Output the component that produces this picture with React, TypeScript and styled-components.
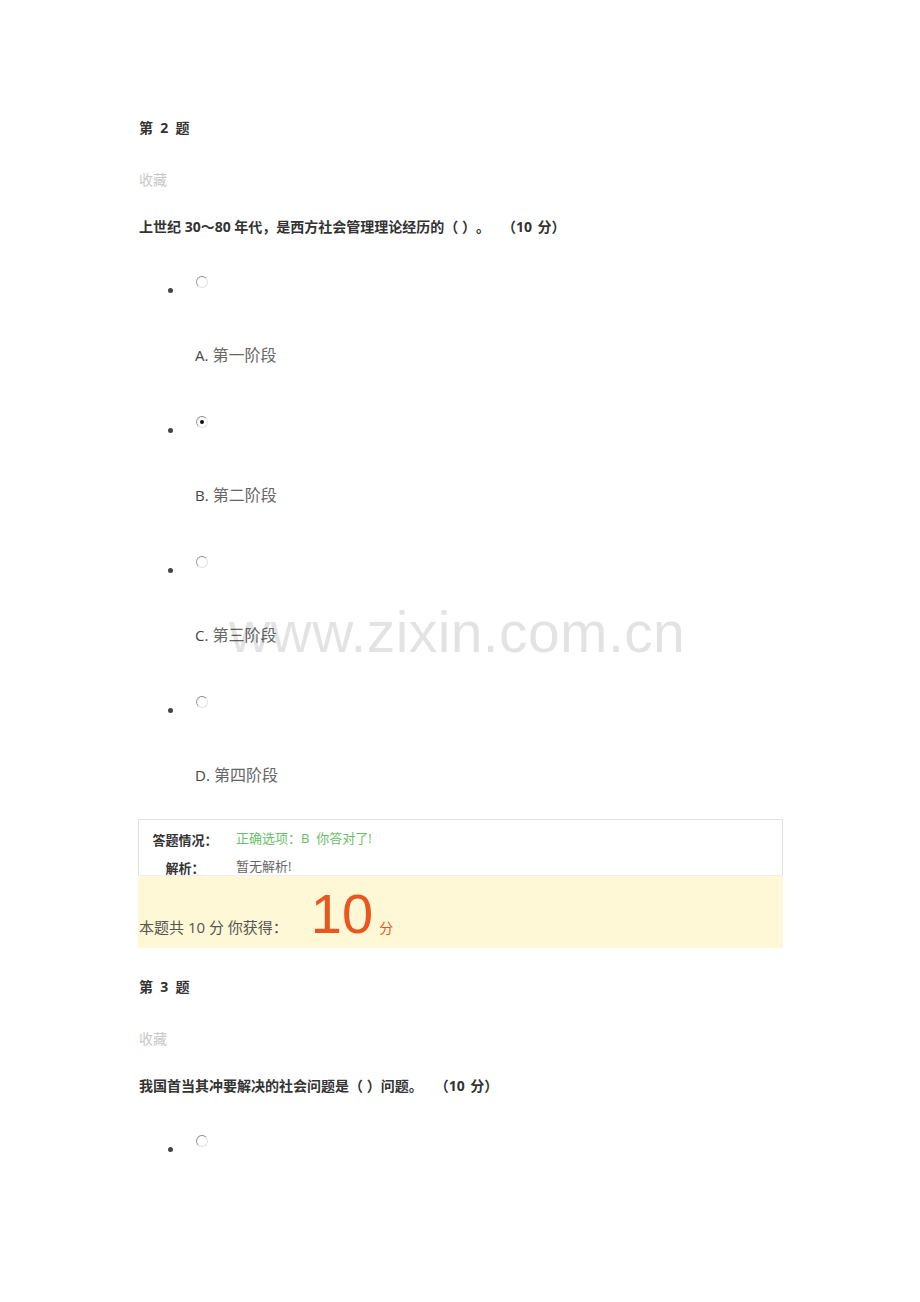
import React from 'react'
import styled, { createGlobalStyle } from 'styled-components'

const GlobalStyle = createGlobalStyle`
  html, body {
    margin: 0;
    padding: 0;
    background: #fff;
  }
  body {
    font-family: "Open Sans", "Noto Sans CJK SC", sans-serif;
    text-spacing-trim: space-all;
    font-feature-settings: "chws" 0, "halt" 0, "palt" 0;
  }
`

const Page = styled.div`
  position: relative;
  width: 920px;
  min-height: 1302px;
  box-sizing: border-box;
  padding: 118px 0 0 139px;
  color: #333;
`

const Title = styled.div`
  font-size: 14px;
  line-height: 20px;
  font-weight: 700;
  color: #333;
  white-space: pre;
`

const Collect = styled.div`
  margin-top: 32px;
  font-size: 14px;
  line-height: 20px;
  color: #c8c8c8;
`

const Stem = styled.div`
  margin-top: 27px;
  font-size: 14px;
  line-height: 20px;
  font-weight: 700;
  color: #333;
  white-space: pre;
`

const Score = styled.span`
  margin-left: 12px;
  word-spacing: 2px;
`

const OptionList = styled.ul`
  list-style: none;
  margin: 0;
  padding: 0;
`

const OptionItem = styled.li`
  margin-top: 37px;
  & + & {
    margin-top: 49px;
  }
`

const OptionRow = styled.div`
  display: flex;
  height: 20px;
  padding-left: 29px;
`

const Bullet = styled.span`
  align-self: flex-end;
  width: 5px;
  height: 5px;
  margin-bottom: 1px;
  border-radius: 50%;
  background: #444;
`

const Radio = styled.span<{ $checked?: boolean }>`
  position: relative;
  align-self: flex-start;
  margin: 2px 0 0 23px;
  width: 12px;
  height: 12px;
  box-sizing: border-box;
  border-radius: 50%;
  border: 1.5px solid;
  border-color: #8a8a8a #e2e2e2 #e2e2e2 #9a9a9a;
  background: #fff;

  &::after {
    content: '';
    display: ${p => (p.$checked ? 'block' : 'none')};
    position: absolute;
    left: 2.5px;
    top: 2.5px;
    width: 4px;
    height: 4px;
    border-radius: 50%;
    background: #111;
  }
`

const OptionLabel = styled.div`
  margin-top: 51px;
  padding-left: 56px;
  font-size: 16px;
  line-height: 20px;
  color: #666;

  b {
    font-weight: 400;
    color: #444;
    font-size: 15px;
  }
`

const ResultBox = styled.div`
  margin: 34px 0 0 -1px;
  width: 645px;
  height: 57px;
  box-sizing: border-box;
  border: 1px solid #e1e1e1;
  border-bottom-color: #eee;
  padding-top: 6px;
  display: grid;
  grid-template-columns: 92px 1fr;
  grid-auto-rows: 24px;
  row-gap: 4px;
  font-size: 13px;
  line-height: 24px;
`

const ResultLabel = styled.div`
  text-align: center;
  color: #333;
  font-weight: 700;
  padding-top: 2px;
`

const ResultValue = styled.div<{ $tone: 'ok' | 'plain' }>`
  padding-left: 5px;
  color: ${p => (p.$tone === 'ok' ? '#68c068' : '#666')};
`

const ScoreBar = styled.div`
  margin-left: -1px;
  width: 645px;
  height: 72px;
  box-sizing: border-box;
  padding: 10px 0 0 1px;
  background: #fef8d6;
  display: flex;
  align-items: baseline;
  line-height: 56px;
  font-size: 15px;
  color: #555;
  white-space: pre;
`

const BigScore = styled.span`
  margin-left: 23px;
  font-family: "Liberation Sans", Arial, sans-serif;
  font-size: 56px;
  color: #e9561f;
`

const Unit = styled.span`
  margin-left: 6px;
  font-size: 14px;
  color: #e9561f;
`

const Next = styled.div`
  margin-top: 29px;
`

const Watermark = styled.div`
  position: absolute;
  left: 229px;
  top: 600px;
  font-family: "Liberation Sans", Arial, sans-serif;
  font-size: 57px;
  line-height: 64px;
  letter-spacing: 0.4px;
  color: rgba(0, 0, 0, 0.11);
  pointer-events: none;
  white-space: nowrap;
`

type Option = { key: string; text: string }

const options: Option[] = [
  { key: 'A', text: '第一阶段' },
  { key: 'B', text: '第二阶段' },
  { key: 'C', text: '第三阶段' },
  { key: 'D', text: '第四阶段' },
]

function Choice ({ option, checked, showLabel = true }: { option: Option; checked?: boolean; showLabel?: boolean }) {
  return (
    <OptionItem>
      <OptionRow>
        <Bullet />
        <Radio $checked={checked} />
      </OptionRow>
      {showLabel && <OptionLabel><b>{option.key}.</b> {option.text}</OptionLabel>}
    </OptionItem>
  )
}

export default function App () {
  return (
    <>
      <GlobalStyle />
      <Page>
        <Title>{'第  2  题'}</Title>
        <Collect>收藏</Collect>
        <Stem>
          上世纪 30～80 年代，是西方社会管理理论经历的（ ）。<Score>（10 分）</Score>
        </Stem>
        <OptionList>
          {options.map(o => (
            <Choice key={o.key} option={o} checked={o.key === 'B'} />
          ))}
        </OptionList>

        <ResultBox>
          <ResultLabel>答题情况：</ResultLabel>
          <ResultValue $tone='ok'>正确选项：B&nbsp; 你答对了!</ResultValue>
          <ResultLabel>解析：</ResultLabel>
          <ResultValue $tone='plain'>暂无解析!</ResultValue>
        </ResultBox>
        <ScoreBar>
          {'本题共 10 分 你获得：'}
          <BigScore>10</BigScore>
          <Unit>分</Unit>
        </ScoreBar>

        <Next>
          <Title>{'第  3  题'}</Title>
          <Collect>收藏</Collect>
          <Stem>
            我国首当其冲要解决的社会问题是（ ）问题。<Score>（10 分）</Score>
          </Stem>
          <OptionList>
            <Choice option={{ key: 'A', text: '' }} showLabel={false} />
          </OptionList>
        </Next>

        <Watermark>www.zixin.com.cn</Watermark>
      </Page>
    </>
  )
}
